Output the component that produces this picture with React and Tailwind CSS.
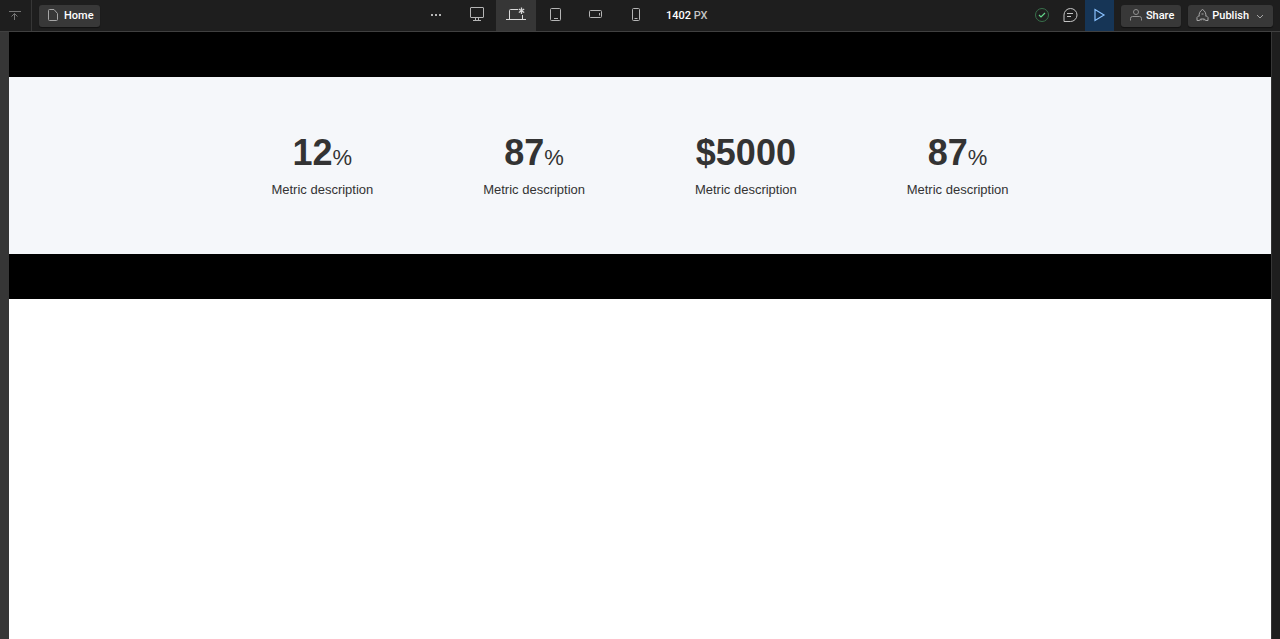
import React from 'react';

const metrics = [
  { value: '12', unit: '%' },
  { value: '87', unit: '%' },
  { value: '$5000', unit: '' },
  { value: '87', unit: '%' },
];

function Icon({ size = 16, children, className = '' }) {
  return (
    <svg
      width={size}
      height={size}
      viewBox={`0 0 ${size} ${size}`}
      fill="none"
      stroke="currentColor"
      strokeWidth="1"
      className={`shrink-0 ${className}`}
      aria-hidden="true"
    >
      {children}
    </svg>
  );
}

const devices = [
  {
    label: 'Desktop',
    icon: (
      <Icon size={16}>
        <rect x="2.5" y="0.5" width="13" height="10" rx="0.5" />
        <path d="M7.5 10.5v3M10.5 10.5v3M5 13.5h8" />
      </Icon>
    ),
  },
  {
    label: 'Base breakpoint',
    active: true,
    icon: (
      <Icon size={20} className="text-[#d9d9d9]">
        <path d="M3.5 14V5.5a1 1 0 0 1 1-1H12M16.5 10v4M0 14.5h20" />
        <path d="M15.5 2.5v6.500M12.800 4l5.400 3.500M18.200 4l-5.400 3.500" strokeWidth="1.3" />
      </Icon>
    ),
  },
  {
    label: 'Tablet',
    icon: (
      <Icon size={16}>
        <rect x="2.5" y="1.5" width="10" height="12" rx="1" />
        <path d="M6 11.5h4" />
      </Icon>
    ),
  },
  {
    label: 'Mobile landscape',
    icon: (
      <Icon size={16}>
        <rect x="1.5" y="3.5" width="12" height="7" rx="1" />
        <path d="M11.5 6v2.5" />
      </Icon>
    ),
  },
  {
    label: 'Mobile portrait',
    icon: (
      <Icon size={16}>
        <rect x="4.5" y="1.5" width="7" height="12" rx="1" />
        <path d="M6.5 11.5h3" />
      </Icon>
    ),
  },
];

const pill =
  'flex h-[22px] items-center rounded-[3px] bg-[#383838] text-white shadow-[0_1px_1px_#111111]';

function TopBar() {
  return (
    <header className="grid h-8 grid-cols-[1fr_448px_1fr] border-b border-[#404040] bg-[#1e1e1e] text-[11px] font-medium text-[#b5b5b5]">
      <div className="flex items-center">
        <button aria-label="Collapse" className="flex h-full w-8 items-center justify-center border-r border-[#363636] pr-px text-[#757575]">
          <Icon>
            <path d="M2 3.5h12M7.5 5.5V12M4.5 8.5l3-3 3 3" />
          </Icon>
        </button>
        <button className={`${pill} ml-[7px] gap-[3px] pr-1.5 pl-1.5`}>
          <Icon className="mb-0.5 text-[#a6a6a6]">
            <path d="M4.5 2.5H9L12.5 6.5V12.5a1 1 0 0 1-1 1h-7a1 1 0 0 1-1-1v-9a1 1 0 0 1 1-1Z" />
          </Icon>
          <span className="pt-0.5">Home</span>
        </button>
      </div>

      <div className="flex items-center">
        <button aria-label="More breakpoints" className="flex h-full w-10 items-center justify-center pb-px">
          <svg width="10" height="2" viewBox="0 0 10 2" fill="#b5b5b5" aria-hidden="true">
            <rect width="2" height="2" />
            <rect x="4" width="2" height="2" />
            <rect x="8" width="2" height="2" />
          </svg>
        </button>
        {devices.map((d) => (
          <button
            key={d.label}
            aria-label={d.label}
            className={`flex h-full w-10 items-center justify-center pb-px ${d.active ? 'bg-[#363636]' : ''}`}
          >
            {d.icon}
          </button>
        ))}
        <p className="pt-0.5 pl-2.5 text-[#c4c4c4]">
          <span className="text-white">1402</span> PX
        </p>
      </div>

      <div className="flex items-center justify-end">
        <button aria-label="Saved" className="flex h-full w-7 items-center justify-center pb-px text-[#38704b]">
          <Icon>
            <circle cx="8" cy="8" r="6.5" />
            <path d="M5 8l2 2 4-4" stroke="#63d489" strokeWidth="1.2" />
          </Icon>
        </button>
        <button aria-label="Comments" className="flex h-full w-[29px] items-center justify-center pb-px text-[#c4c4c4]">
          <Icon>
            <path d="M2 14.5V8a6.500 6.500 0 1 1 6.500 6.500H2M5 6.5h6M5 9.5h4" />
          </Icon>
        </button>
        <button aria-label="Preview" className="flex h-full w-[29px] items-center justify-center bg-[#163556] pb-px text-[#8ac2ff]">
          <Icon>
            <path d="M4 2.500v11L13 8Z" strokeWidth="1.2" />
          </Icon>
        </button>
        <button className={`${pill} ml-[7px] gap-0.5 pr-[7px] pl-[7px]`}>
          <Icon className="mb-0.5 text-[#919191]">
            <circle cx="8" cy="5" r="2.5" />
            <path d="M2.500 13.500v-2a2 2 0 0 1 2-2h7a2 2 0 0 1 2 2v2" />
          </Icon>
          <span className="pt-0.5">Share</span>
        </button>
        <button className={`${pill} mr-[7px] ml-[7px] pr-[9px] pl-1.5`}>
          <Icon className="mr-0.5 mb-0.5 text-[#a6a6a6]">
            <path d="M5 9.500C5 6 6 4 8.500 2.500 11 4 12 6 12 9.500M5 8.500l-2 2v3h2.500l1-1.500h4l1 1.500h2.500v-3l-2-2M7 12v1.500M10 12v1.500" />
            <path d="M7.500 7h2" />
          </Icon>
          <span className="pt-0.5">Publish</span>
          <Icon size={8} className="ml-[7px] text-[#a6a6a6]">
            <path d="M1 3l3 3 3-3" />
          </Icon>
        </button>
      </div>
    </header>
  );
}

export default function App() {
  return (
    <div className="flex min-h-screen flex-col bg-[#1e1e1e] font-[Roboto,sans-serif]">
      <TopBar />
      <div className="flex flex-1 border-l-9 border-[#363636] pr-2">
        <main className="flex-1 border-r border-[#363636] bg-white font-['Liberation_Sans',Arial,sans-serif] text-[#333333]">
          <div className="h-[45px] bg-black" />
          <section className="bg-[#f5f7fa] py-[54px]">
            <div className="mx-auto grid max-w-[847px] grid-cols-4 text-center">
              {metrics.map((m, i) => (
                <div key={i}>
                  <div className="text-4xl leading-[44px] font-bold">
                    {m.value}
                    {m.unit && <span className="text-[22px] leading-none font-normal">{m.unit}</span>}
                  </div>
                  <p className="mt-1 text-[13px] leading-[21px]">Metric description</p>
                </div>
              ))}
            </div>
          </section>
          <div className="h-[45px] bg-black" />
        </main>
      </div>
    </div>
  );
}
